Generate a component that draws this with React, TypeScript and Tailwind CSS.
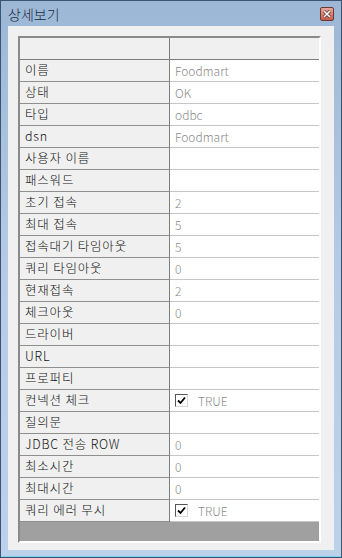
import React from 'react';

type Row = { label: string; value?: string; check?: boolean };

const rows: Row[] = [
    { label: '이름', value: 'Foodmart' },
    { label: '상태', value: 'OK' },
    { label: '타입', value: 'odbc' },
    { label: 'dsn', value: 'Foodmart' },
    { label: '사용자 이름' },
    { label: '패스워드' },
    { label: '초기 접속', value: '2' },
    { label: '최대 접속', value: '5' },
    { label: '접속대기 타임아웃', value: '5' },
    { label: '쿼리 타임아웃', value: '0' },
    { label: '현재접속', value: '2' },
    { label: '체크아웃', value: '0' },
    { label: '드라이버' },
    { label: 'URL' },
    { label: '프로퍼티' },
    { label: '컨넥션 체크', check: true },
    { label: '질의문' },
    { label: 'JDBC 전송 ROW', value: '0' },
    { label: '최소시간', value: '0' },
    { label: '최대시간', value: '0' },
    { label: '쿼리 에러 무시', check: true },
];

const font = { fontFamily: '"Noto Sans CJK KR", "Noto Sans", sans-serif' };

function CheckBox() {
    return (
        <div className="w-[13px] h-[13px] bg-white border border-t-[#555] border-l-[#555] border-r-[#d8d8d8] border-b-[#d8d8d8] flex items-center justify-center">
            <svg width="9" height="9" viewBox="0 0 9 9">
                <path d="M1 4.5 L3.5 7 L8 1.5" stroke="#000" strokeWidth="1.8" fill="none" />
            </svg>
        </div>
    );
}

function CloseButton() {
    return (
        <div className="w-[14px] h-[14px] rounded-[2px] border border-[#6b3a32] bg-gradient-to-b from-[#e7a89c] to-[#c55b4b] flex items-center justify-center">
            <svg width="8" height="8" viewBox="0 0 8 8">
                <path d="M1 1 L7 7 M7 1 L1 7" stroke="#5a2a22" strokeWidth="3" />
                <path d="M1 1 L7 7 M7 1 L1 7" stroke="#fff" strokeWidth="1.6" />
            </svg>
        </div>
    );
}

export default function App() {
    return (
        <div className="w-[342px] h-[558px] border border-[#3d5470] bg-gradient-to-b from-[#9cb7d6] via-[#b6cce6] to-[#bcd2ea] flex flex-col" style={font}>
            <div className="h-[25px] flex items-center justify-between pl-[7px] pr-[7px] shrink-0">
                <span className="text-[14px] font-light text-[#1b2b3d] leading-none pt-[1px]">상세보기</span>
                <CloseButton />
            </div>
            <div className="flex-1 px-[7px] pb-[6px] border-b border-[#7fd0f0]">
                <div className="h-full bg-[#f0f0f0] pt-[10px] pl-[10px] pr-[13px] pb-[7px]">
                    <div className="h-full flex flex-col border-t-2 border-l-2 border-t-[#8a8a8a] border-l-[#8a8a8a] border-r-2 border-b-2 border-r-white border-b-white">
                        <div className="flex h-[22px] bg-[#f0f0f0] border-b border-[#7d7d7d] shrink-0">
                            <div className="w-[150px] border-r border-[#7d7d7d]" />
                            <div className="flex-1" />
                        </div>
                        {rows.map((r) => (
                            <div key={r.label} className="flex h-[22px] shrink-0 leading-none font-light">
                                <div className="w-[150px] bg-[#f0f0f0] border-r border-b border-r-[#7d7d7d] border-b-[#8f8f8f] flex items-center pl-[5px] text-[12.5px] tracking-[0.8px] text-[#111]">
                                    {r.label}
                                </div>
                                <div className="flex-1 bg-white border-b border-[#c6c6c6] flex items-center pl-[5px] text-[12px] text-[#8c8c8c]">
                                    {r.check ? (
                                        <div className="flex items-center gap-[10px]">
                                            <CheckBox />
                                            <span>TRUE</span>
                                        </div>
                                    ) : (
                                        r.value
                                    )}
                                </div>
                            </div>
                        ))}
                        <div className="flex-1 bg-[#a0a0a0]" />
                    </div>
                </div>
            </div>
        </div>
    );
}
